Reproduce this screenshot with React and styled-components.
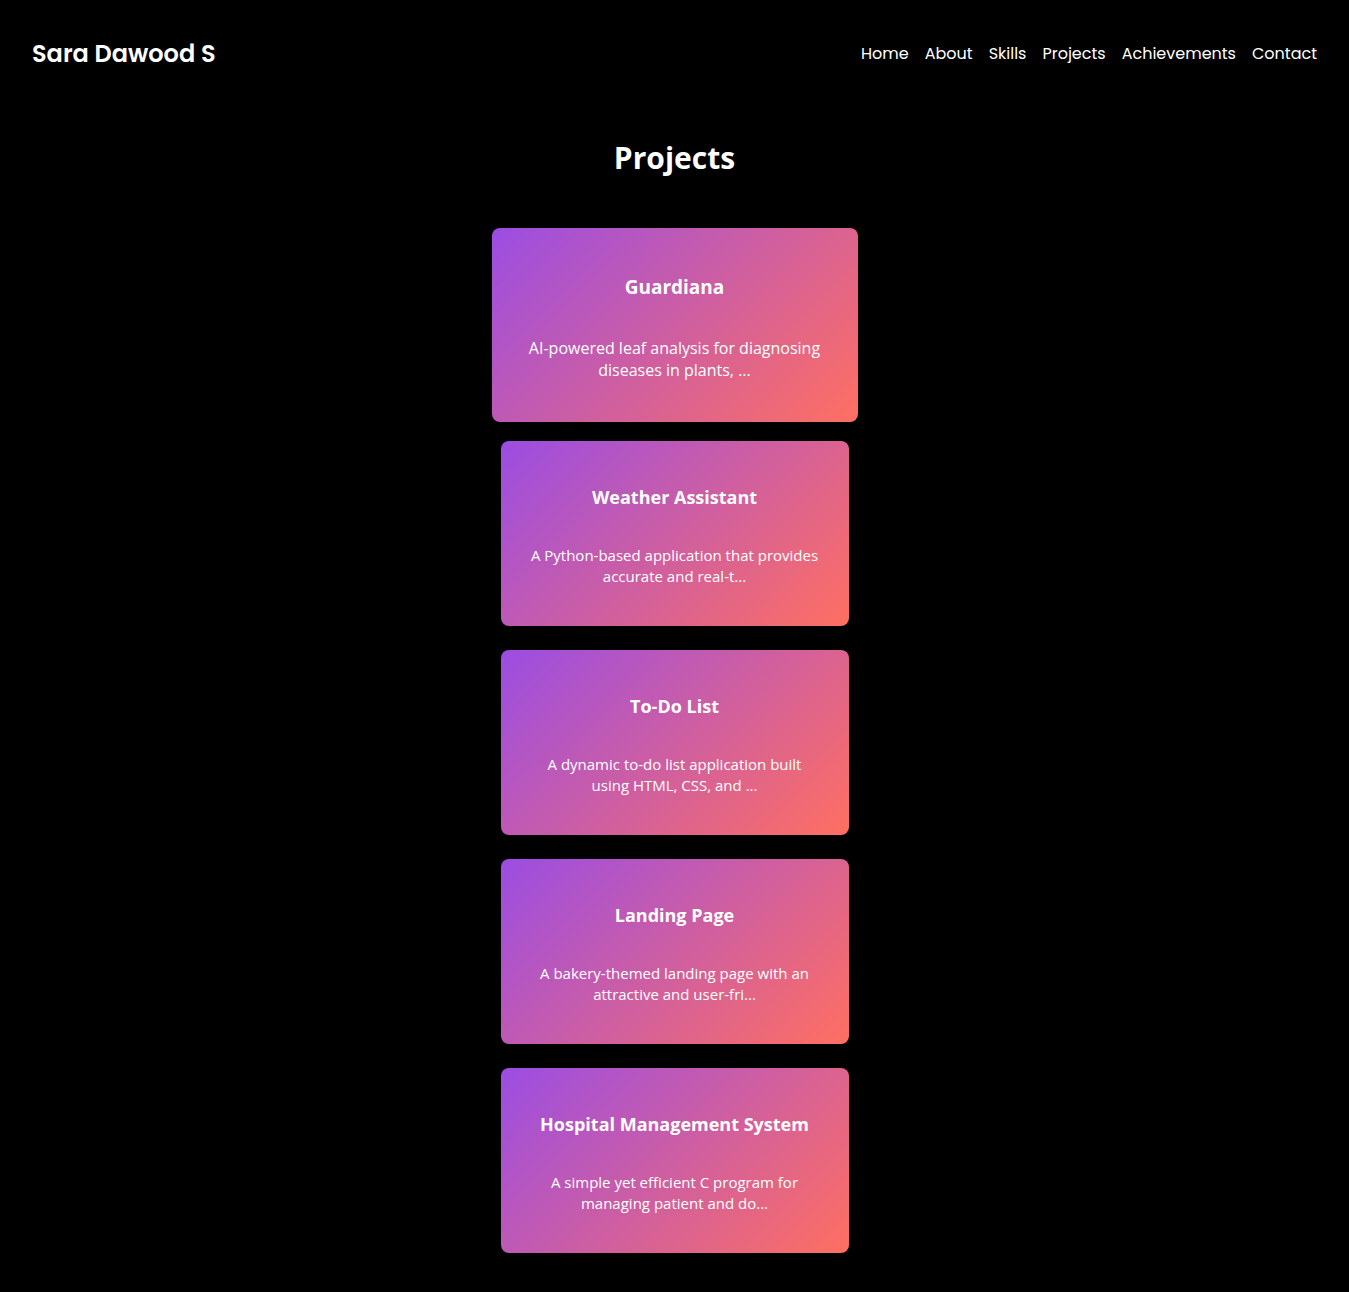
import React from "react";
import styled, { createGlobalStyle } from "styled-components";

const GlobalStyle = createGlobalStyle`
  * { box-sizing: border-box; }
  body {
    margin: 0;
    background: #000;
    color: #fff;
    font-family: "Segoe UI", "Open Sans", "Noto Sans", sans-serif;
  }
`;

const Header = styled.header`
  display: flex;
  align-items: center;
  justify-content: space-between;
  flex-wrap: wrap;
  gap: 16px;
  padding: 36px 32px;
  font-family: Poppins, Inter, sans-serif;
`;

const Brand = styled.a`
  color: #fff;
  font-size: 24px;
  font-weight: 600;
  line-height: 36px;
  text-decoration: none;
`;

const NavList = styled.ul`
  display: flex;
  flex-wrap: wrap;
  gap: 16px;
  margin: 0;
  padding: 0;
  font-size: 16px;
  line-height: 24px;
  list-style: none;
`;

const NavLink = styled.a`
  color: #fff;
  text-decoration: none;
`;

const Section = styled.section`
  display: flex;
  flex-direction: column;
  align-items: center;
  padding: 28px 16px 36px;
`;

const Heading = styled.h1`
  margin: 0 0 48px;
  font-size: 30px;
  font-weight: 700;
  line-height: 44px;
`;

const CardList = styled.div`
  display: flex;
  flex-direction: column;
  align-items: center;
  width: 100%;
`;

const Card = styled.article`
  display: flex;
  flex-direction: column;
  gap: ${(p) => (p.$active ? 37 : 35)}px;
  width: 100%;
  max-width: ${(p) => (p.$active ? 366 : 348)}px;
  min-height: ${(p) => (p.$active ? 194 : 185)}px;
  margin-bottom: ${(p) => (p.$active ? 19 : 24)}px;
  padding: ${(p) => (p.$active ? "46px 28px 40px" : "43px 28px 38px")};
  border-radius: 8px;
  background: linear-gradient(135deg, #9b4de3, #ff6f61);
  text-align: center;
  cursor: pointer;

  &:last-child {
    margin-bottom: 0;
  }
`;

const CardTitle = styled.h2`
  margin: 0;
  font-size: ${(p) => (p.$active ? 19 : 18)}px;
  font-weight: 700;
  line-height: 26px;
`;

const CardText = styled.p`
  margin: 0;
  font-size: ${(p) => (p.$active ? 16 : 15)}px;
  line-height: ${(p) => (p.$active ? 22 : 21)}px;
`;

const links = ["Home", "About", "Skills", "Projects", "Achievements", "Contact"];

const projects = [
  { title: "Guardiana", text: "AI-powered leaf analysis for diagnosing diseases in plants, ...", active: true },
  { title: "Weather Assistant", text: "A Python-based application that provides accurate and real-t..." },
  { title: "To-Do List", text: "A dynamic to-do list application built using HTML, CSS, and ..." },
  { title: "Landing Page", text: "A bakery-themed landing page with an attractive and user-fri..." },
  { title: "Hospital Management System", text: "A simple yet efficient C program for managing patient and do..." },
];

export default function App() {
  return (
    <>
      <GlobalStyle />
      <Header>
        <Brand href="#home">Sara Dawood S</Brand>
        <nav>
          <NavList>
            {links.map((label) => (
              <li key={label}>
                <NavLink href={`#${label.toLowerCase()}`}>{label}</NavLink>
              </li>
            ))}
          </NavList>
        </nav>
      </Header>
      <Section id="projects">
        <Heading>Projects</Heading>
        <CardList>
          {projects.map((p) => (
            <Card key={p.title} $active={p.active}>
              <CardTitle $active={p.active}>{p.title}</CardTitle>
              <CardText $active={p.active}>{p.text}</CardText>
            </Card>
          ))}
        </CardList>
      </Section>
    </>
  );
}
